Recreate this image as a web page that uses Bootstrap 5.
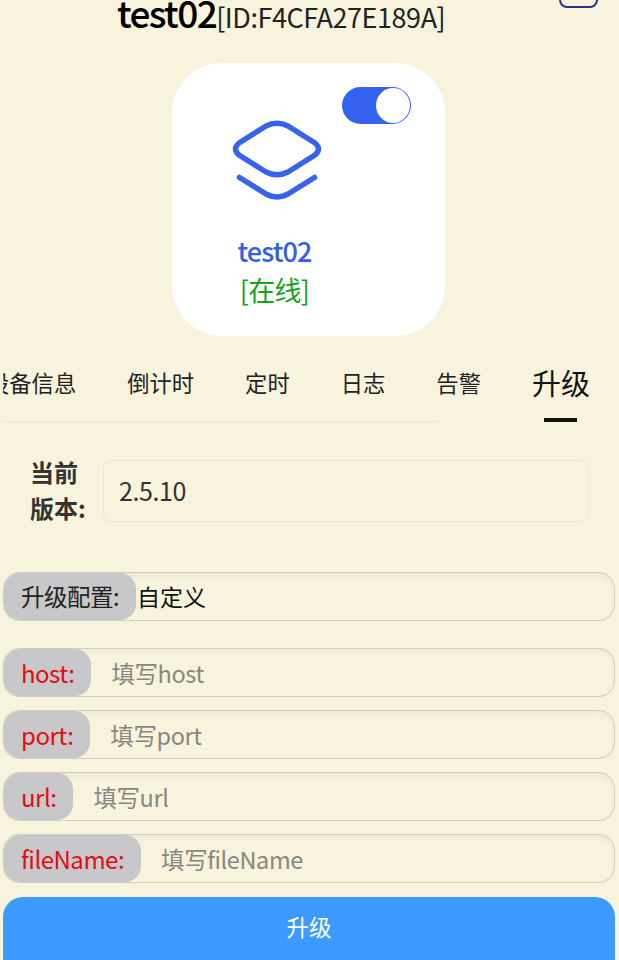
<!DOCTYPE html>
<html lang="zh-CN">
<head>
<meta charset="utf-8">
<title>test02</title>
<link href="https://cdn.jsdelivr.net/npm/bootstrap@5.3.0/dist/css/bootstrap.min.css" rel="stylesheet">
<style>
html,body{height:960px;overflow:hidden;}
body{background:#f7f3dc;font-family:"Noto Sans CJK SC","Noto Sans",sans-serif;color:#222;}
.page-wrap{width:619px;height:960px;overflow:hidden;padding:0 4px 0 3px;}
.top-line{height:74px;margin-top:-11px;position:relative;padding-left:114px;align-items:baseline;line-height:46px;white-space:nowrap;}
.dev-name{font-size:37px;font-weight:500;letter-spacing:-1.6px;color:#000;}
.dev-id{font-size:27px;letter-spacing:-.45px;color:#222;}
.corner-btn{position:absolute;right:17px;top:-18px;width:39px;height:37px;border:2px solid #28367f;border-radius:8px;}
.dev-box{width:273px;height:273px;background:#fff;border-radius:50px;margin-left:169px;position:relative;}
.dev-toggle{position:absolute;left:170px;top:24px;width:69px;height:37px;border-radius:19px;background:#3563f0;}
.dev-knob{position:absolute;right:1px;top:1px;width:34px;height:35px;border-radius:50%;background:#fff;}
.dev-icon{position:absolute;left:60px;top:57px;width:90px;height:80px;}
.dev-texts{position:absolute;left:0;width:205px;top:169px;text-align:center;}
.dev-title{font-size:27px;font-weight:500;line-height:38px;letter-spacing:-.9px;color:#3560e6;}
.dev-state{font-size:27px;line-height:40px;letter-spacing:-.7px;color:#12a51c;}
.tab-strip{height:86px;overflow:hidden;position:relative;}
.tab-list{margin-left:-16px;gap:51px;flex-wrap:nowrap;white-space:nowrap;align-items:center;height:93px;padding-bottom:1px;}
.tab-item{font-size:22.3px;color:#222;line-height:32px;}
.tab-item.is-on{font-size:29px;color:#111;}
.tab-rule{position:absolute;left:0;top:85px;width:435px;height:1px;background:#e9e5d0;}
.tab-bar{position:absolute;left:541px;top:82px;width:33px;height:4px;background:#111;}
.ver-row{margin-top:38px;height:62px;}
.ver-label{width:100px;padding-left:27px;margin-top:-6px;font-size:24px;font-weight:700;line-height:36px;color:#333;white-space:nowrap;}
.ver-value{width:486px;height:62px;border:1px solid #ebe7d3;border-radius:8px;padding:0 15px;font-size:25px;letter-spacing:-.4px;color:#333;background:transparent;}
.cfg-group{height:49px;border:1px solid #cfcdc4;border-radius:16px;box-shadow:inset 0 3px 5px rgba(120,115,90,.08);overflow:hidden;background:transparent;margin-bottom:13px;flex-wrap:nowrap;}
.cfg-first{margin-top:50px;margin-bottom:27px;}
.cfg-group .input-group-text{background:#c8c7c9;border:0;font-size:23.5px;letter-spacing:-.5px;color:#222;padding:0 17px 0 17px;height:100%;}
.cfg-group .input-group-text.need{font-size:24px;color:#e30c12;}
.cfg-group .form-control{background:transparent;border:0;box-shadow:none;border-radius:0;font-size:23.5px;letter-spacing:-.4px;padding:0 0 0 21px;height:100%;color:#222;}
.cfg-group .form-control::placeholder{color:#88877f;opacity:1;}
.cfg-value{font-size:23px;line-height:47px;padding-left:2px;color:#111;}
.go-btn{display:block;width:100%;height:90px;margin-top:14px;background:#3d9bff;border:0;border-radius:20px;color:#fff;font-size:22.5px;padding:0 0 31px;}
.go-btn:hover{background:#3d9bff;color:#fff;}
</style>
</head>
<body>
<div class="page-wrap">
  <div class="top-line d-flex">
    <span class="dev-name">test02</span><span class="dev-id">[ID:F4CFA27E189A]</span>
    <span class="corner-btn"></span>
  </div>
  <div class="dev-box">
    <span class="dev-toggle"><span class="dev-knob"></span></span>
    <svg class="dev-icon" viewBox="0 0 90 80" fill="none" stroke="#3563ee" stroke-width="5.5" stroke-linecap="round" stroke-linejoin="round">
      <path d="M34 6 Q45 .5 56 6 L83 23 Q90 29 83 35 L56 52 Q45 57.5 34 52 L7 35 Q0 29 7 23 Z"/>
      <path d="M7.5 57.5 L34 74 Q45 80 56 74 L82.5 57.5"/>
    </svg>
    <div class="dev-texts">
      <div class="dev-title">test02</div>
      <div class="dev-state">[在线]</div>
    </div>
  </div>
  <div class="tab-strip">
    <div class="nav tab-list">
      <span class="tab-item">设备信息</span>
      <span class="tab-item">倒计时</span>
      <span class="tab-item">定时</span>
      <span class="tab-item">日志</span>
      <span class="tab-item">告警</span>
      <span class="tab-item is-on">升级</span>
    </div>
    <div class="tab-rule"></div>
    <div class="tab-bar"></div>
  </div>
  <div class="ver-row d-flex">
    <div class="ver-label">当前<br>版本:</div>
    <div class="ver-value d-flex align-items-center">2.5.10</div>
  </div>
  <div class="input-group cfg-group cfg-first">
    <span class="input-group-text rounded-4">升级配置:</span>
    <span class="cfg-value">自定义</span>
  </div>
  <div class="input-group cfg-group">
    <span class="input-group-text rounded-4 need">host:</span>
    <input class="form-control" type="text" placeholder="填写host">
  </div>
  <div class="input-group cfg-group">
    <span class="input-group-text rounded-4 need">port:</span>
    <input class="form-control" type="text" placeholder="填写port">
  </div>
  <div class="input-group cfg-group">
    <span class="input-group-text rounded-4 need">url:</span>
    <input class="form-control" type="text" placeholder="填写url">
  </div>
  <div class="input-group cfg-group">
    <span class="input-group-text rounded-4 need">fileName:</span>
    <input class="form-control" type="text" placeholder="填写fileName">
  </div>
  <button type="button" class="btn go-btn">升级</button>
</div>
<script src="https://cdn.jsdelivr.net/npm/bootstrap@5.3.0/dist/js/bootstrap.bundle.min.js"></script>
</body>
</html>
